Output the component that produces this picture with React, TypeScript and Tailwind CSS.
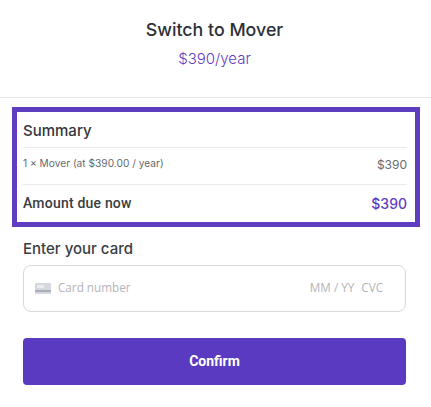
export default function App() {
  return (
    <div className="w-[431px] h-[407px] overflow-hidden bg-white font-['Inter',sans-serif] text-[#2d3035]">
      <header className="h-[98px] border-b border-[#e3e3e6] pt-[18px] pr-[2px] flex flex-col items-center">
        <h1 className="text-[17.8px] leading-[24px] font-medium">Switch to Mover</h1>
        <p className="mt-[5px] text-[15px] leading-[24px] font-light text-[#5f3dc0]">$390/year</p>
      </header>

      <section className="mt-[9px] ml-[12px] w-[408px] h-[120px] border-[5px] border-[#5f3dc0] pl-[6px] pr-[8px]">
        <h2 className="h-[36px] pt-[9px] text-[15px] leading-[20px] font-medium text-[#33363b] border-b border-[#e9e9ec]">Summary</h2>
        <div className="h-[37px] border-b border-[#e9e9ec] flex justify-between">
          <span className="mt-[7px] text-[10.2px] leading-[16px] text-[#666a70]">1 × Mover (at $390.00 / year)</span>
          <span className="mt-[7px] text-[12px] leading-[20px] text-[#666a70]">$390</span>
        </div>
        <div className="flex justify-between items-center h-[36px]">
          <span className="text-[14px] font-medium font-['Roboto',sans-serif] tracking-[0.2px] text-[#3a3d42]">Amount due now</span>
          <span className="text-[14px] font-medium text-[#5f3dc0]">$390</span>
        </div>
      </section>

      <div className="px-[23px] mr-[2px]">
        <h2 className="mt-[12px] text-[15px] leading-[20px] font-medium text-[#3a3d42]">Enter your card</h2>
        <div className="mt-[6px] h-[47px] pb-[1px] border border-[#d9d9dc] rounded-[8px] flex items-center pl-[11px] pr-[22px] font-['Open_Sans',sans-serif] text-[11.7px] text-[#b4b4b8]">
          <svg width="16" height="11" viewBox="0 0 16 11" className="mr-[7px] shrink-0">
            <rect x="0" y="0" width="16" height="11" rx="1" fill="#d4d8de" />
            <rect x="2" y="2" width="7" height="3" fill="#e9ebee" />
            <rect x="0" y="7" width="16" height="2" fill="#a9afb8" />
          </svg>
          <span>Card number</span>
          <span className="ml-auto">MM / YY</span>
          <span className="ml-[7px]">CVC</span>
        </div>
        <button className="mt-[26px] w-full h-[47px] rounded-[4px] bg-[#5b3ac2] text-white text-[14px] font-bold font-['Roboto',sans-serif]">
          Confirm
        </button>
      </div>
    </div>
  );
}
